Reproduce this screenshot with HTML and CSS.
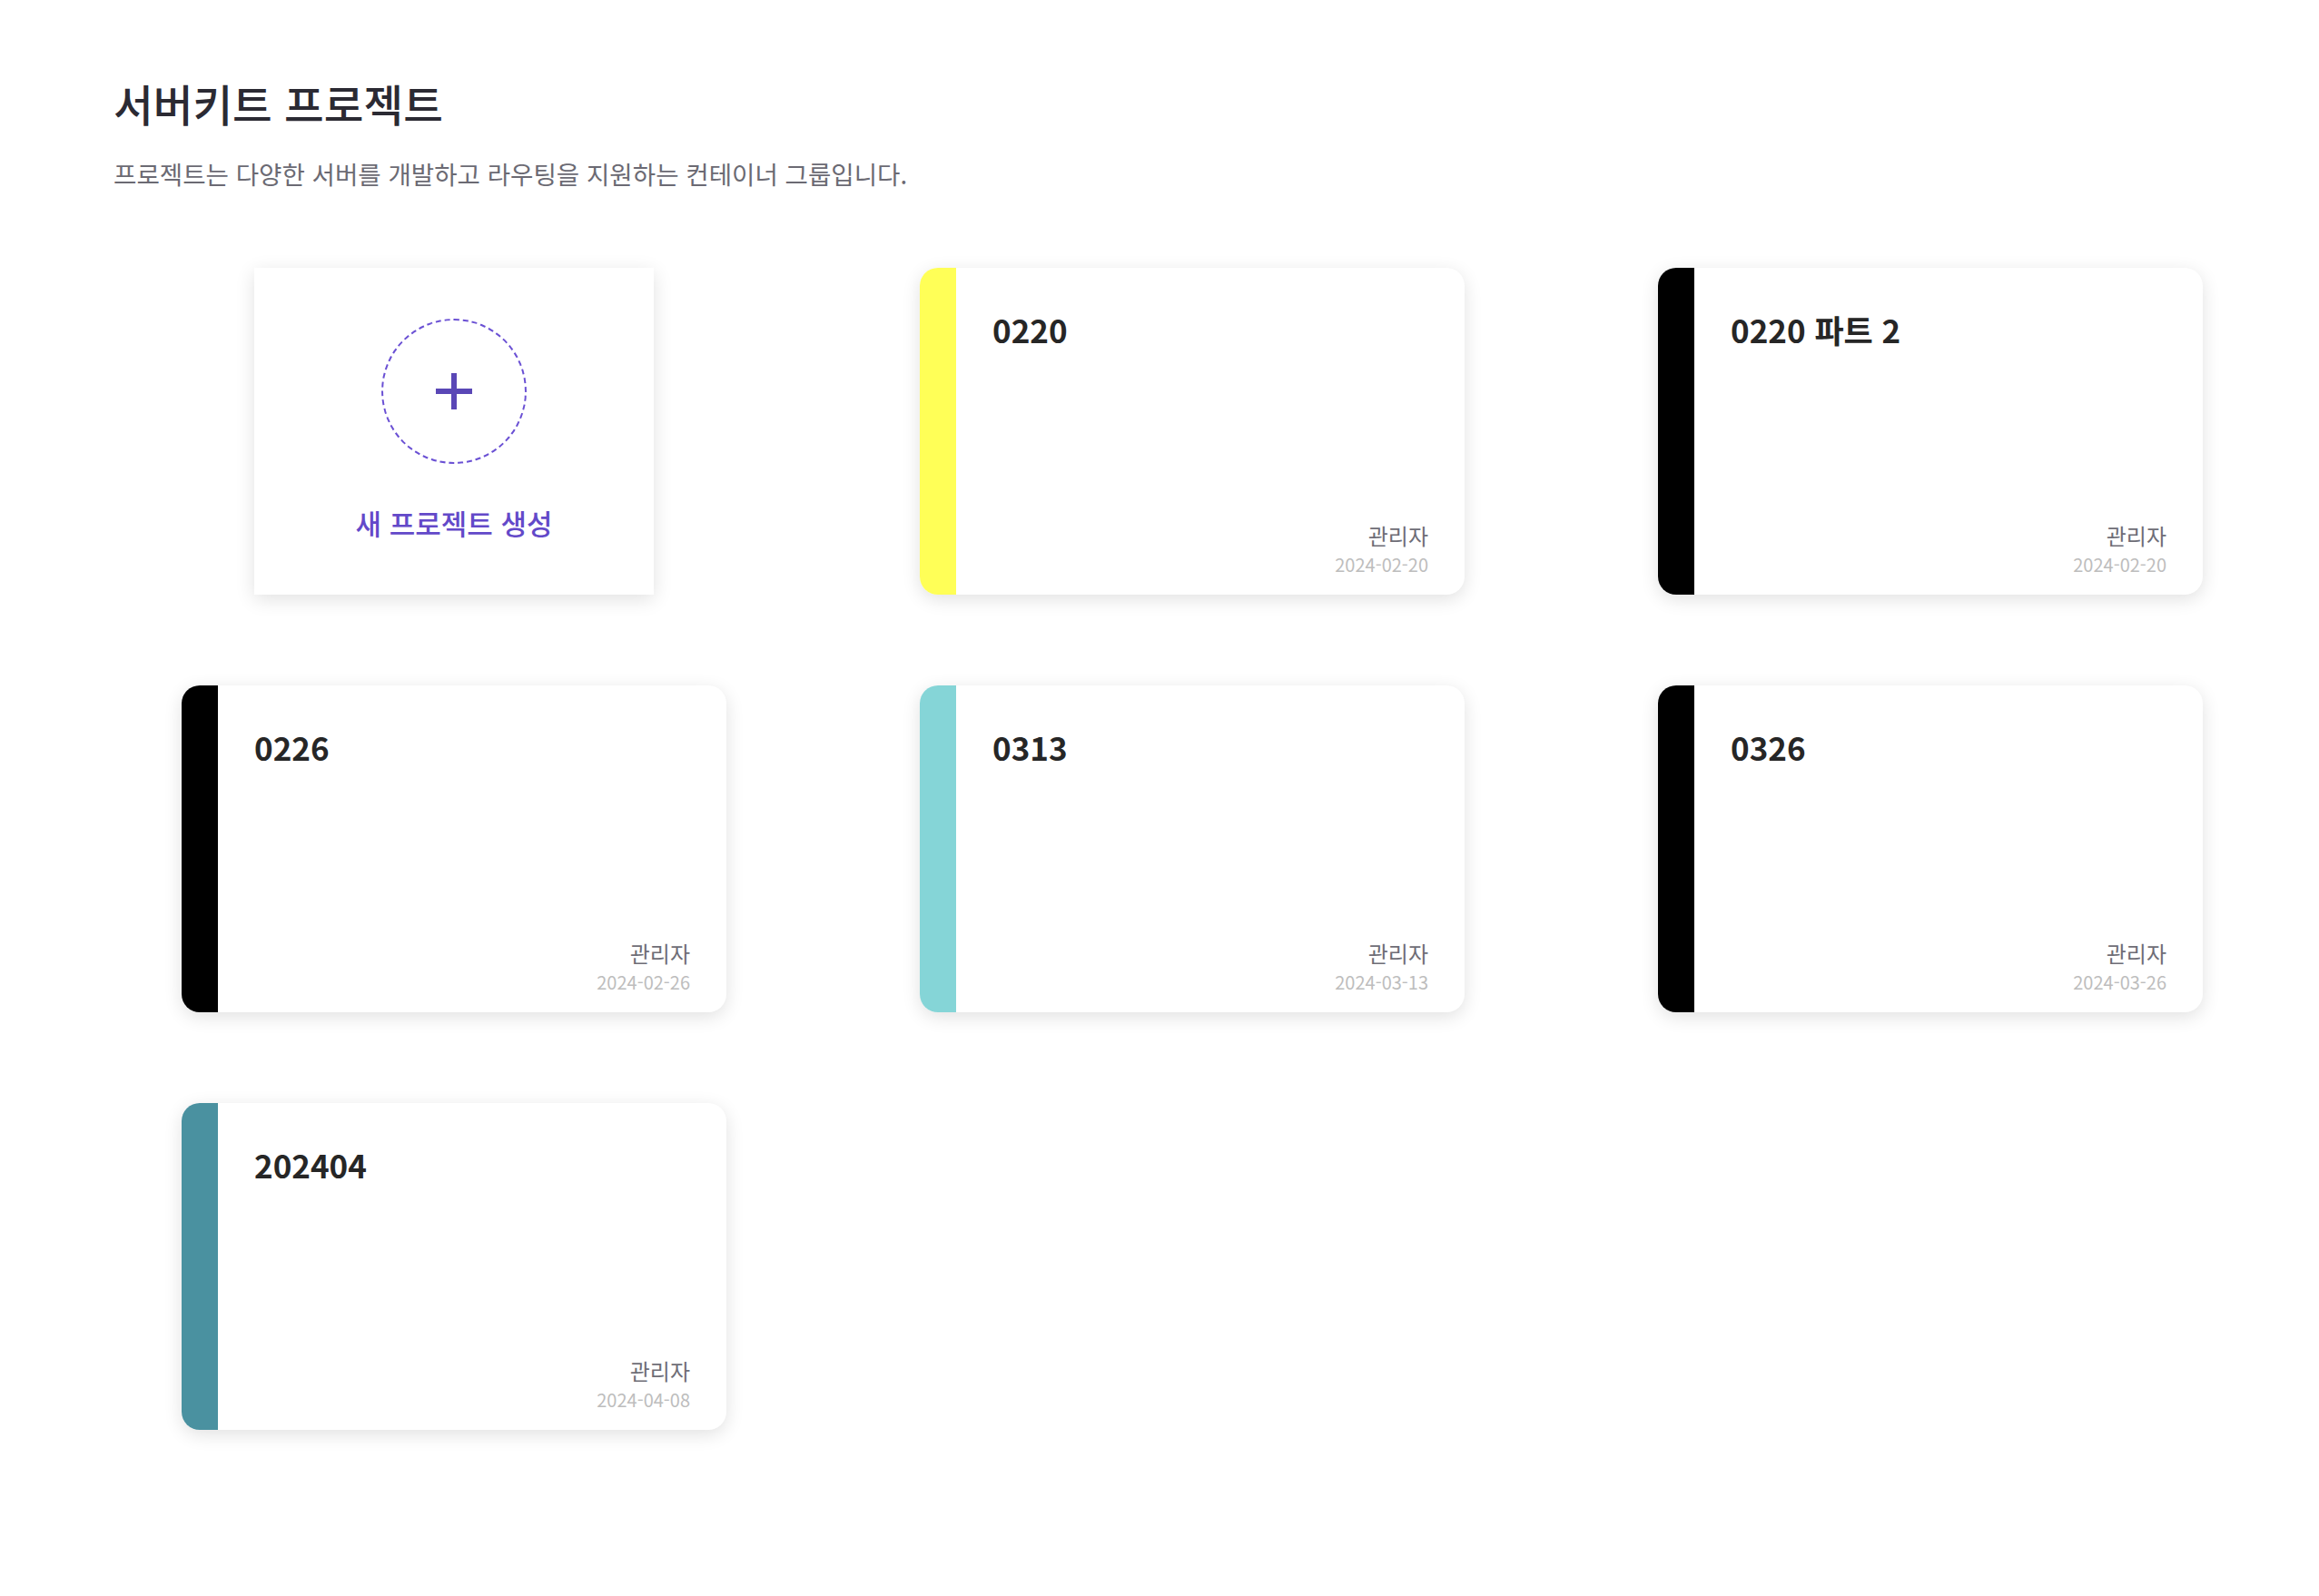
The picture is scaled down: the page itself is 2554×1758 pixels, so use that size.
FILE: index.html
```html
<!DOCTYPE html>
<html lang="ko">
<head>
<meta charset="utf-8">
<title>서버키트 프로젝트</title>
<link rel="stylesheet" href="styles.css">
</head>
<body>
<main class="page">
  <header class="page-header">
    <h1 class="page-title">서버키트 프로젝트</h1>
    <p class="page-desc">프로젝트는 다양한 서버를 개발하고 라우팅을 지원하는 컨테이너 그룹입니다.</p>
  </header>

  <section class="grid">
    <div class="new-card">
      <div class="new-circle">
        <svg class="plus" viewBox="0 0 40 40" width="40" height="40" aria-hidden="true">
          <rect x="17" y="0" width="6" height="40" fill="#5a47b6"/>
          <rect x="0" y="17" width="40" height="6" fill="#5a47b6"/>
        </svg>
      </div>
      <div class="new-label">새 프로젝트 생성</div>
    </div>

    <article class="card">
      <div class="card-bar bar-yellow"></div>
      <div class="card-body">
        <h2 class="card-title">0220</h2>
        <div class="card-meta">
          <div class="card-owner">관리자</div>
          <div class="card-date">2024-02-20</div>
        </div>
      </div>
    </article>

    <article class="card">
      <div class="card-bar bar-black"></div>
      <div class="card-body">
        <h2 class="card-title">0220 파트 2</h2>
        <div class="card-meta">
          <div class="card-owner">관리자</div>
          <div class="card-date">2024-02-20</div>
        </div>
      </div>
    </article>

    <article class="card">
      <div class="card-bar bar-black"></div>
      <div class="card-body">
        <h2 class="card-title">0226</h2>
        <div class="card-meta">
          <div class="card-owner">관리자</div>
          <div class="card-date">2024-02-26</div>
        </div>
      </div>
    </article>

    <article class="card">
      <div class="card-bar bar-aqua"></div>
      <div class="card-body">
        <h2 class="card-title">0313</h2>
        <div class="card-meta">
          <div class="card-owner">관리자</div>
          <div class="card-date">2024-03-13</div>
        </div>
      </div>
    </article>

    <article class="card">
      <div class="card-bar bar-black"></div>
      <div class="card-body">
        <h2 class="card-title">0326</h2>
        <div class="card-meta">
          <div class="card-owner">관리자</div>
          <div class="card-date">2024-03-26</div>
        </div>
      </div>
    </article>

    <article class="card">
      <div class="card-bar bar-teal"></div>
      <div class="card-body">
        <h2 class="card-title">202404</h2>
        <div class="card-meta">
          <div class="card-owner">관리자</div>
          <div class="card-date">2024-04-08</div>
        </div>
      </div>
    </article>
  </section>
</main>
</body>
</html>
```

FILE: styles.css
```css
html, body {
  margin: 0;
  padding: 0;
  background: #ffffff;
}

body {
  font-family: "Noto Sans CJK KR", "Noto Sans", sans-serif;
  color: #2b2a33;
}

.page {
  padding: 85px 125px 120px 125px;
}

.page-header {
  display: flex;
  flex-direction: column;
}

.page-title {
  margin: 0;
  font-size: 47.5px;
  line-height: 1.2;
  font-weight: 500;
  color: #2b2a33;
}

.page-desc {
  margin: 30px 0 0 0;
  font-size: 27.6px;
  line-height: 1.4;
  font-weight: 400;
  color: #6b6a73;
}

.grid {
  margin-top: 84px;
  padding-left: 75px;
  display: grid;
  grid-template-columns: repeat(3, 600px);
  grid-auto-rows: 360px;
  column-gap: 213px;
  row-gap: 100px;
}

.new-card {
  justify-self: center;
  box-sizing: border-box;
  width: 440px;
  height: 360px;
  padding-bottom: 4px;
  background: #ffffff;
  box-shadow: 0 5px 20px rgba(0, 0, 0, 0.12);
  display: flex;
  flex-direction: column;
  align-items: center;
  justify-content: center;
  gap: 46px;
}

.new-circle {
  width: 156px;
  height: 156px;
  border: 2px dashed #6a50d4;
  border-radius: 50%;
  display: flex;
  align-items: center;
  justify-content: center;
}

.plus {
  display: block;
}

.new-label {
  font-size: 31px;
  line-height: 1.2;
  font-weight: 500;
  color: #6349c9;
}

.card {
  display: flex;
  background: #ffffff;
  border-radius: 20px;
  overflow: hidden;
  box-shadow: 0 5px 20px rgba(0, 0, 0, 0.12);
}

.card-bar {
  width: 40px;
  flex: 0 0 40px;
}

.bar-yellow { background: #ffff57; }
.bar-black { background: #000000; }
.bar-aqua { background: #85d5d7; }
.bar-teal { background: #4a91a0; }

.card-body {
  flex: 1;
  padding: 47px 40px 21px 40px;
  display: flex;
  flex-direction: column;
  justify-content: space-between;
}

.card-title {
  margin: 0;
  font-size: 35px;
  line-height: 1.2;
  font-weight: 700;
  color: #262626;
}

.card-meta {
  display: flex;
  flex-direction: column;
  align-items: flex-end;
}

.card-owner {
  margin-bottom: 5px;
  font-size: 24px;
  line-height: 1.2;
  color: #6e6d76;
}

.card-date {
  font-size: 20px;
  line-height: 1.2;
  color: #bdbdbd;
}
```
